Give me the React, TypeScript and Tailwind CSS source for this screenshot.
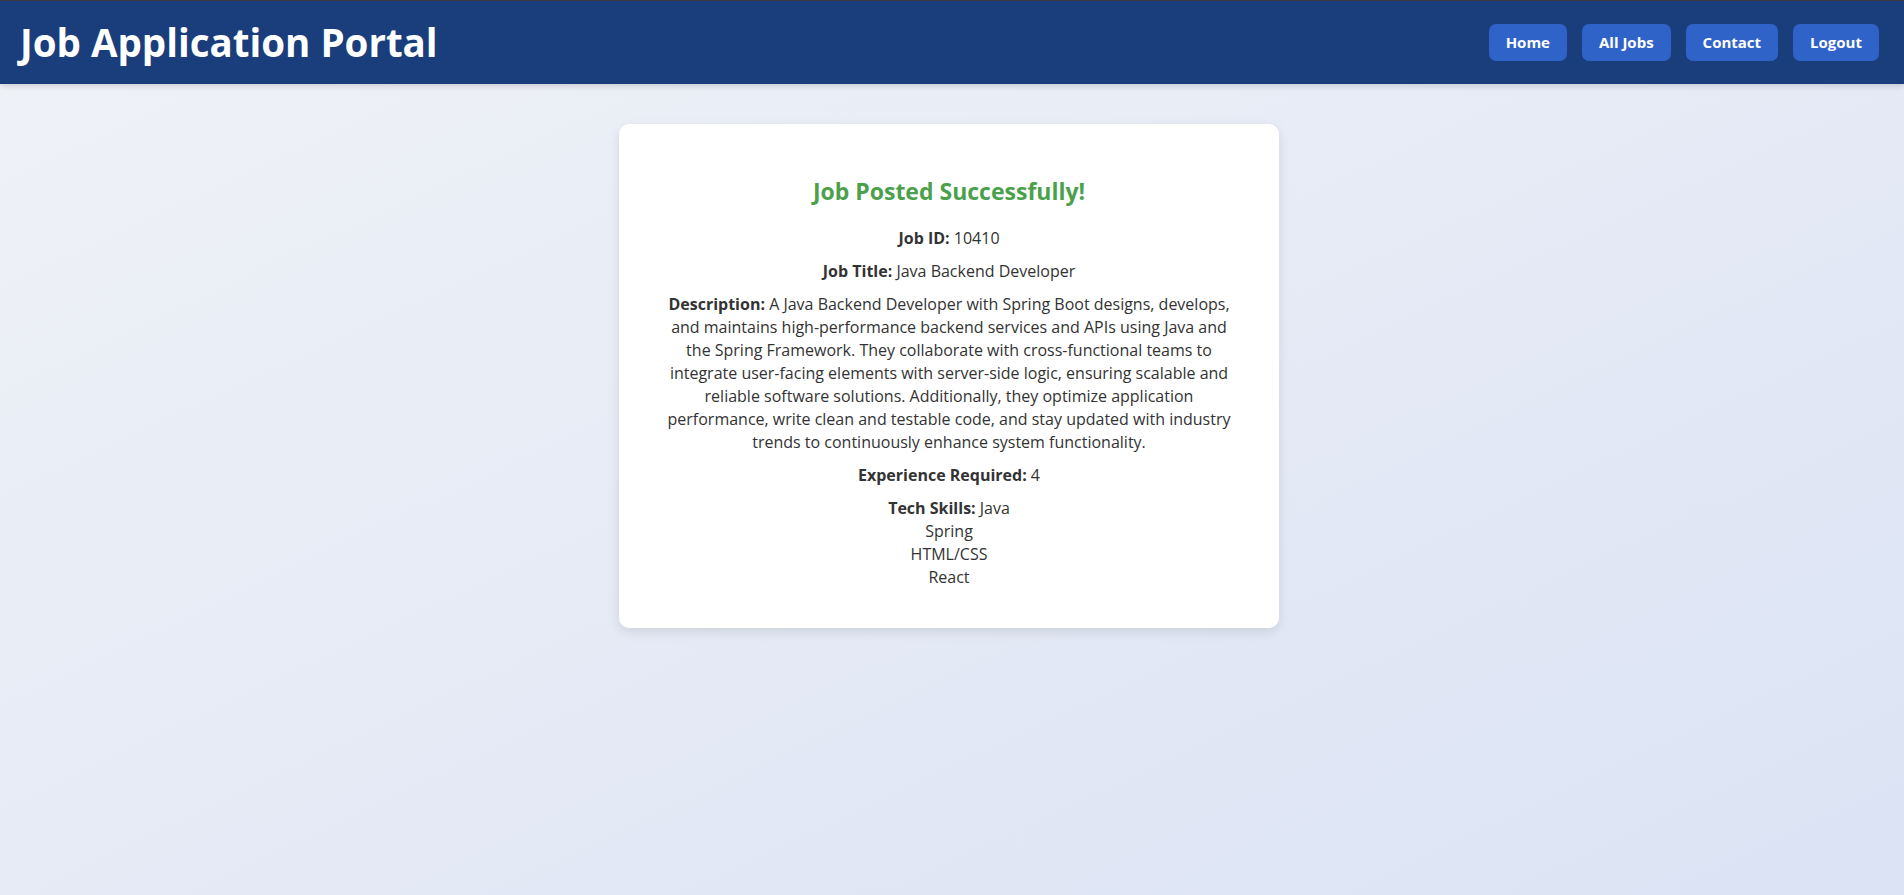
const skills = ['Java', 'Spring', 'HTML/CSS', 'React'];

const navLinks = ['Home', 'All Jobs', 'Contact', 'Logout'];

export default function App() {
  return (
    <div
      className="min-h-screen bg-gradient-to-br from-[#f0f2f7] to-[#dbe3f4] text-[#333]"
      style={{ fontFamily: '"Open Sans", "Noto Sans", sans-serif' }}
    >
      {/* Header */}
      <header className="h-[84px] bg-[#1a3d7c] border-t border-[#3a3a3a] shadow-[0_2px_6px_rgba(0,0,0,0.15)] flex items-center justify-between pl-[20px] pr-[25px]">
        <h1 className="text-[38.5px] font-bold text-white leading-none">Job Application Portal</h1>
        <nav className="flex gap-[15px]">
          {navLinks.map((link) => (
            <button
              key={link}
              className="h-[37px] px-[17px] rounded-[7px] bg-[#2f63c8] text-white text-[15px] font-bold"
            >
              {link}
            </button>
          ))}
        </nav>
      </header>

      {/* Confirmation card */}
      <main className="pt-10 flex justify-center">
        <div className="w-[660px] bg-white rounded-[10px] shadow-[0_4px_12px_rgba(0,0,0,0.1)] px-[39px] pt-[31px] pb-[29px] text-center text-[16px] leading-[23px] ml-[-6px]">
          <h2 className="text-[23px] font-bold text-[#4ba14b] leading-[32px] mt-5 mb-5">
            Job Posted Successfully!
          </h2>
          <p className="my-2.5">
            <strong>Job ID:</strong> 10410
          </p>
          <p className="my-2.5">
            <strong>Job Title:</strong> Java Backend Developer
          </p>
          <p className="my-2.5">
            <strong>Description:</strong> A Java Backend Developer with Spring Boot designs, develops, and
            maintains high-performance backend services and APIs using Java and the Spring Framework. They
            collaborate with cross-functional teams to integrate user-facing elements with server-side logic,
            ensuring scalable and reliable software solutions. Additionally, they optimize application
            performance, write clean and testable code, and stay updated with industry trends to continuously
            enhance system functionality.
          </p>
          <p className="my-2.5">
            <strong>Experience Required:</strong> 4
          </p>
          <p className="my-2.5">
            <strong>Tech Skills:</strong>{' '}
            {skills.map((skill, i) => (
              <span key={skill}>
                {i > 0 && <br />}
                {skill}
              </span>
            ))}
          </p>
        </div>
      </main>
    </div>
  );
}
